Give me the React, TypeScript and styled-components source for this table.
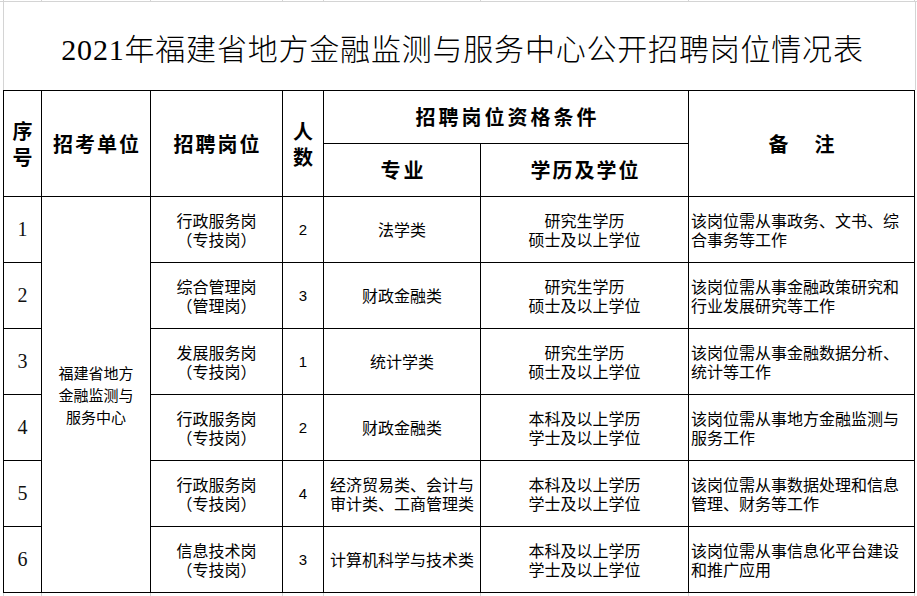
import React from 'react';
import styled, { createGlobalStyle } from 'styled-components';

const GlobalStyle = createGlobalStyle`
  body {
    margin: 0;
    background: #ffffff;
    font-family: 'Noto Sans CJK SC', sans-serif;
    color: #000000;
  }
`;

const COLS = '37px 108px 131px 40px 156px 207px 225px';
const GRID_GRAY = '#d4d4d4';
const CJK = "'Noto Sans CJK SC', sans-serif";

const Sheet = styled.div`
  width: 917px;
  height: 596px;
  overflow: hidden;
  background: #ffffff;
`;

const Strip = styled.div<{ $h: number }>`
  display: grid;
  grid-template-columns: ${COLS};
  column-gap: 1px;
  padding: 0 1px;
  margin-left: 3px;
  width: 912px;
  height: ${(p) => p.$h}px;
  background: ${GRID_GRAY};
  box-sizing: border-box;
  & > span {
    background: #ffffff;
  }
`;

const TopLine = styled.div`
  height: 1px;
  background: ${GRID_GRAY};
`;

const TitleCell = styled.div`
  margin-left: 3px;
  width: 913px;
  height: 88px;
  box-sizing: border-box;
  border-left: 1px solid ${GRID_GRAY};
  border-right: 1px solid ${GRID_GRAY};
  display: flex;
  align-items: center;
  justify-content: center;
  font-family: 'Liberation Serif', 'Noto Sans CJK SC', serif;
  font-size: 30px;
  font-weight: 300;
  letter-spacing: 0.8px;
  padding-top: 2px;
  padding-left: 6px;
`;

const Table = styled.div`
  display: grid;
  grid-template-columns: ${COLS};
  grid-template-rows: 52px 52px repeat(6, 65px);
  gap: 1px;
  padding: 1px;
  margin-left: 3px;
  width: 912px;
  box-sizing: border-box;
  background: #000000;
`;

const Cell = styled.div<{ $rows?: number; $cols?: number; $align?: 'left' | 'center' }>`
  background: #ffffff;
  grid-row: span ${(p) => p.$rows || 1};
  grid-column: span ${(p) => p.$cols || 1};
  display: flex;
  flex-direction: column;
  justify-content: center;
  align-items: ${(p) => (p.$align === 'left' ? 'flex-start' : 'center')};
  padding-left: ${(p) => (p.$align === 'left' ? '2px' : '0')};
  font-family: ${CJK};
  font-size: 16px;
  line-height: 19px;
  white-space: nowrap;
`;

const HeadText = styled.span<{ $spacing?: number }>`
  font-family: ${CJK};
  font-size: 20px;
  font-weight: 700;
  line-height: 26px;
  letter-spacing: ${(p) => p.$spacing ?? 2}px;
  padding-left: ${(p) => p.$spacing ?? 2}px;
`;

const SeqNum = styled.span`
  font-family: 'Liberation Serif', serif;
  font-size: 20px;
  color: #111111;
`;

const CountNum = styled.span`
  font-family: 'Liberation Sans', sans-serif;
  font-size: 15px;
`;

const UnitText = styled.div`
  font-size: 15px;
  line-height: 22px;
  text-align: center;
`;

type Row = {
  post: string[];
  count: string;
  major: string[];
  degree: string[];
  note: string[];
};

const rows: Row[] = [
  {
    post: ['行政服务岗', '（专技岗）'],
    count: '2',
    major: ['法学类'],
    degree: ['研究生学历', '硕士及以上学位'],
    note: ['该岗位需从事政务、文书、综', '合事务等工作'],
  },
  {
    post: ['综合管理岗', '（管理岗）'],
    count: '3',
    major: ['财政金融类'],
    degree: ['研究生学历', '硕士及以上学位'],
    note: ['该岗位需从事金融政策研究和', '行业发展研究等工作'],
  },
  {
    post: ['发展服务岗', '（专技岗）'],
    count: '1',
    major: ['统计学类'],
    degree: ['研究生学历', '硕士及以上学位'],
    note: ['该岗位需从事金融数据分析、', '统计等工作'],
  },
  {
    post: ['行政服务岗', '（专技岗）'],
    count: '2',
    major: ['财政金融类'],
    degree: ['本科及以上学历', '学士及以上学位'],
    note: ['该岗位需从事地方金融监测与', '服务工作'],
  },
  {
    post: ['行政服务岗', '（专技岗）'],
    count: '4',
    major: ['经济贸易类、会计与', '审计类、工商管理类'],
    degree: ['本科及以上学历', '学士及以上学位'],
    note: ['该岗位需从事数据处理和信息', '管理、财务等工作'],
  },
  {
    post: ['信息技术岗', '（专技岗）'],
    count: '3',
    major: ['计算机科学与技术类'],
    degree: ['本科及以上学历', '学士及以上学位'],
    note: ['该岗位需从事信息化平台建设', '和推广应用'],
  },
];

const Lines = ({ items }: { items: string[] }) => (
  <>
    {items.map((t, i) => (
      <span key={i}>{t}</span>
    ))}
  </>
);

const GridTicks = ({ h }: { h: number }) => (
  <Strip $h={h}>
    {Array.from({ length: 7 }).map((_, i) => (
      <span key={i} />
    ))}
  </Strip>
);

export default function App() {
  return (
    <Sheet>
      <GlobalStyle />
      <GridTicks h={1} />
      <TopLine />
      <TitleCell>2021年福建省地方金融监测与服务中心公开招聘岗位情况表</TitleCell>
      <Table>
        <Cell $rows={2}>
          <HeadText $spacing={0}>序</HeadText>
          <HeadText $spacing={0}>号</HeadText>
        </Cell>
        <Cell $rows={2}>
          <HeadText $spacing={2}>招考单位</HeadText>
        </Cell>
        <Cell $rows={2}>
          <HeadText $spacing={2}>招聘岗位</HeadText>
        </Cell>
        <Cell $rows={2}>
          <HeadText $spacing={0}>人</HeadText>
          <HeadText $spacing={0}>数</HeadText>
        </Cell>
        <Cell $cols={2}>
          <HeadText $spacing={3}>招聘岗位资格条件</HeadText>
        </Cell>
        <Cell $rows={2}>
          <HeadText $spacing={3}>备　注</HeadText>
        </Cell>
        <Cell>
          <HeadText $spacing={3}>专业</HeadText>
        </Cell>
        <Cell>
          <HeadText $spacing={2}>学历及学位</HeadText>
        </Cell>

        {rows.map((r, i) => (
          <React.Fragment key={i}>
            <Cell>
              <SeqNum>{i + 1}</SeqNum>
            </Cell>
            {i === 0 && (
              <Cell $rows={6}>
                <UnitText>
                  福建省地方
                  <br />
                  金融监测与
                  <br />
                  服务中心
                </UnitText>
              </Cell>
            )}
            <Cell>
              <Lines items={r.post} />
            </Cell>
            <Cell>
              <CountNum>{r.count}</CountNum>
            </Cell>
            <Cell>
              <Lines items={r.major} />
            </Cell>
            <Cell>
              <Lines items={r.degree} />
            </Cell>
            <Cell $align="left">
              <Lines items={r.note} />
            </Cell>
          </React.Fragment>
        ))}
      </Table>
      <GridTicks h={4} />
    </Sheet>
  );
}
